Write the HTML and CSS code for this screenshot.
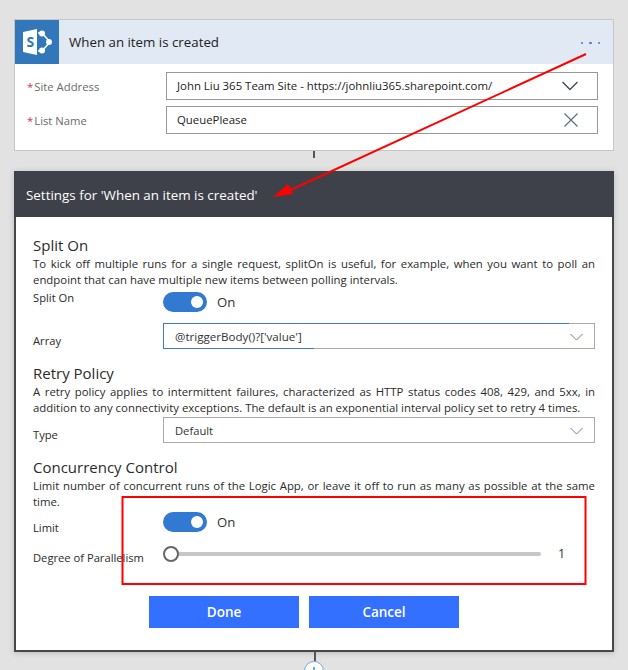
FILE: index.html
```html
<!DOCTYPE html>
<html lang="en">
<head>
<meta charset="utf-8">
<title>When an item is created</title>
<link rel="stylesheet" href="styles.css">
</head>
<body>
<main class="page">
  <section class="card">
    <header class="card-head">
      <div class="logo">
        <svg width="30" height="26" viewBox="0 0 30 26"><path class="logo-fill" d="M0 3 14 0V26L0 23Z"/><path class="logo-line" d="M15 4H19L27 13 19 22H15"/><circle class="logo-fill" cx="19" cy="4.500" r="3"/><circle class="logo-fill" cx="26" cy="13" r="3"/><circle class="logo-fill" cx="19" cy="21.500" r="3"/><text class="logo-s" x="3.500" y="18">S</text></svg>
      </div>
      <h1 class="card-title">When an item is created</h1>
      <div class="dots"><i></i><i></i><i></i></div>
    </header>
    <div class="card-body">
      <div class="field">
        <label class="field-label"><span class="req">*</span>Site Address</label>
        <div class="field-input"><span>John Liu 365 Team Site - https://johnliu365.sharepoint.com/</span>
          <svg width="16" height="10" viewBox="0 0 16 10"><path class="ic-dark" d="M.5 1 8 8.500 15.500 1"/></svg>
        </div>
      </div>
      <div class="field">
        <label class="field-label"><span class="req">*</span>List Name</label>
        <div class="field-input"><span>QueuePlease</span>
          <svg width="14" height="14" viewBox="0 0 14 14"><path class="ic-grey" d="M.5.500 13.500 13.500M13.500.500.500 13.500"/></svg>
        </div>
      </div>
    </div>
  </section>
  <div class="stub"></div>
  <section class="settings">
    <header class="settings-head">Settings for 'When an item is created'</header>
    <div class="settings-body">
      <h2 class="sec-title">Split On</h2>
      <p class="sec-text">To kick off multiple runs for a single request, splitOn is useful, for example, when you want to poll an endpoint that can have multiple new items between polling intervals.</p>
      <div class="row row-toggle-a">
        <span class="row-label">Split On</span>
        <div class="toggle"><span class="switch"><i></i></span><span>On</span></div>
      </div>
      <div class="row row-select">
        <span class="row-label row-label-low">Array</span>
        <div class="select select-active"><span class="select-code">@triggerBody()?['value']</span>
          <svg width="13" height="8" viewBox="0 0 13 8"><path class="ic-amber" d="M.5 1 6.500 7 12.500 1"/></svg>
        </div>
      </div>
      <h2 class="sec-title sec-gap">Retry Policy</h2>
      <p class="sec-text">A retry policy applies to intermittent failures, characterized as HTTP status codes 408, 429, and 5xx, in addition to any connectivity exceptions. The default is an exponential interval policy set to retry 4 times.</p>
      <div class="row row-select row-tight">
        <span class="row-label row-label-low">Type</span>
        <div class="select"><span>Default</span>
          <svg width="13" height="8" viewBox="0 0 13 8"><path class="ic-blue" d="M.5 1 6.500 7 12.500 1"/></svg>
        </div>
      </div>
      <h2 class="sec-title sec-gap-b">Concurrency Control</h2>
      <p class="sec-text">Limit number of concurrent runs of the Logic App, or leave it off to run as many as possible at the same time.</p>
      <div class="row row-toggle-b">
        <span class="row-label">Limit</span>
        <div class="toggle"><span class="switch"><i></i></span><span>On</span></div>
      </div>
      <div class="row row-slider">
        <span class="row-label">Degree of Parallelism</span>
        <div class="slider"><span class="track"></span><span class="thumb"></span><span class="slider-val">1</span></div>
      </div>
      <div class="actions">
        <button class="btn" type="button">Done</button>
        <button class="btn" type="button">Cancel</button>
      </div>
    </div>
  </section>
  <div class="stub-bottom"><span class="stub-line"></span><span class="stub-circle"></span></div>
  <svg class="notes" width="628" height="670" viewBox="0 0 628 670">
    <path class="note-line" d="M586 54 284 193"/>
    <path class="note-head" d="M273 197 288 184 293 194Z"/>
    <rect class="note-box" x="122.500" y="497" width="463" height="87"/>
  </svg>
</main>
</body>
</html>
```

FILE: styles.css
```css
* { box-sizing: border-box; }
html, body { margin: 0; height: 100%; }
body {
  background: #e2e2e2;
  font-family: "Open Sans", "Noto Sans", "Liberation Sans", sans-serif;
  color: #333;
  overflow: hidden;
}
.page { position: relative; width: 628px; height: 670px; padding: 19px 14px 0; overflow: hidden; }

.card { width: 600px; height: 132px; background: #fff; border: 1px solid #c6c6c6; }
.card-head { display: flex; align-items: center; height: 44px; background: #e0e9f4; }
.logo { width: 44px; height: 44px; background: #3277b9; display: flex; align-items: center; justify-content: center; padding-left: 1px; }
.logo-fill { fill: #fff; }
.logo-line { fill: none; stroke: #fff; stroke-width: 1.500; }
.logo-s { fill: #3277b9; font: 700 14px "Open Sans", sans-serif; }
.card-title { margin: 0 0 0 10px; flex: 1; font-size: 13.300px; font-weight: 400; color: #222; }
.dots { display: flex; gap: 6px; margin: 2px 13px 0 0; }
.dots i { width: 2.500px; height: 2.500px; background: #3c7fd0; border-radius: 50%; }
.card-body { padding: 8px 15px 0 12px; display: flex; flex-direction: column; gap: 6px; }
.field { display: flex; align-items: center; height: 28px; }
.field-label { width: 139px; font-size: 11.300px; color: #6b6b6b; padding-top: 1px; }
.req { color: #c8326e; margin-right: 1px; }
.field-input { flex: 1; height: 28px; border: 1px solid #999; display: flex; justify-content: space-between; align-items: center; padding: 0 19px 0 10px; font-size: 11.400px; color: #222; }
.field-input span { margin-top: -1px; }

.stub { width: 2px; height: 7px; margin-left: 299px; background: #555; }
.settings { margin-top: 13px; width: 600px; height: 481px; background: #fff; border: 2px solid #474747; border-top: 0; box-shadow: 0 1px 6px rgba(0,0,0,.18); }
.settings-head { height: 46px; margin: 0 -2px; background: #3e4149; color: #fff; font-size: 13.400px; padding: 14px 0 0 12px; line-height: 20px; }
.settings-body { padding: 18px 17px 0 17px; }
.sec-title { margin: 0; font-size: 15px; line-height: 21px; font-weight: 400; color: #2b2b2b; }
.sec-text { margin: 0; font-size: 11.390px; line-height: 16px; color: #2b2b2b; text-align: justify; }
.row { display: flex; }
.row-label { width: 130px; font-size: 11.200px; line-height: 16px; color: #2b2b2b; flex: none; }
.row-toggle-a { height: 31px; align-items: flex-start; margin-top: 2px; }
.toggle { display: flex; align-items: center; gap: 10px; font-size: 13.200px; color: #333; height: 20px; margin-top: 2px; }
.switch { width: 44px; height: 20px; border-radius: 10px; background: #3279d2; position: relative; display: block; }
.switch i { position: absolute; right: 4px; top: 4px; width: 12px; height: 12px; border-radius: 50%; background: #fff; }
.row-select { align-items: center; height: 26px; margin-top: 2px; }
.row-label-low { padding-top: 10px; }
.select { position: relative; flex: 1; height: 26px; border: 1px solid #aaa; display: flex; justify-content: space-between; align-items: center; padding: 0 11px; font-size: 11.200px; color: #333; }
.select-code { font-size: 11.600px; }
.select-active { border-left-color: #3d7cc9; }
.select-active::before { content: ""; position: absolute; left: -1px; top: -1px; width: 406px; height: 1px; background: #3d7cc9; }
.select-active::after { content: ""; position: absolute; left: -1px; bottom: -1px; width: 151px; height: 1px; background: #3d7cc9; }
.select svg { margin-top: 2px; }
.ic-dark, .ic-grey, .ic-amber, .ic-blue { fill: none; stroke-width: 1; }
.ic-dark { stroke: #3d4a59; stroke-width: 1.300; }
.ic-grey { stroke: #5f6f80; stroke-width: 1.200; }
.ic-amber { stroke: #8f7a5c; }
.ic-blue { stroke: #5585bd; }
.sec-gap { margin-top: 14px; }
.row-tight { margin-top: 1px; }
.sec-gap-b { margin-top: 14px; }
.row-toggle-b { height: 34px; align-items: flex-start; margin-top: 2px; }
.row-toggle-b .toggle { margin-top: 0; }
.row-toggle-b .row-label { padding-top: 8px; }
.row-slider { height: 24px; align-items: center; margin-top: -4px; }
.row-slider .row-label { padding-top: 7px; }
.slider { position: relative; flex: 1; height: 16px; }
.track { position: absolute; left: 8px; top: 6px; width: 370px; height: 4px; border-radius: 2px; background: #c6c6c6; }
.thumb { position: absolute; left: 0; top: 0; width: 16px; height: 16px; border-radius: 50%; background: #fff; border: 2px solid #666; }
.slider-val { position: absolute; left: 395px; top: 0; font-size: 12.500px; line-height: 16px; color: #333; }
.actions { display: flex; gap: 10px; margin-top: 30px; padding-left: 116px; }
.btn { width: 150px; height: 32px; border: 0; padding: 0; background: #3370ff; color: #fff; font: 600 13.500px "Open Sans", sans-serif; }

.stub-bottom { display: flex; flex-direction: column; align-items: center; width: 600px; }
.stub-line { width: 2px; height: 9px; background: #555; margin-left: 1px; }
.stub-circle { position: relative; width: 20px; height: 20px; border-radius: 50%; border: 1px solid #6fa8e0; background: #fff; }
.stub-circle::after { content: ""; position: absolute; left: 8px; top: 5px; width: 2px; height: 9px; background: #6fa8e0; }

.notes { position: absolute; left: 0; top: 0; pointer-events: none; }
.note-line { stroke: #f00; stroke-width: 2; fill: none; }
.note-head { fill: #f00; }
.note-box { fill: none; stroke: #f00; stroke-width: 2; }
```
